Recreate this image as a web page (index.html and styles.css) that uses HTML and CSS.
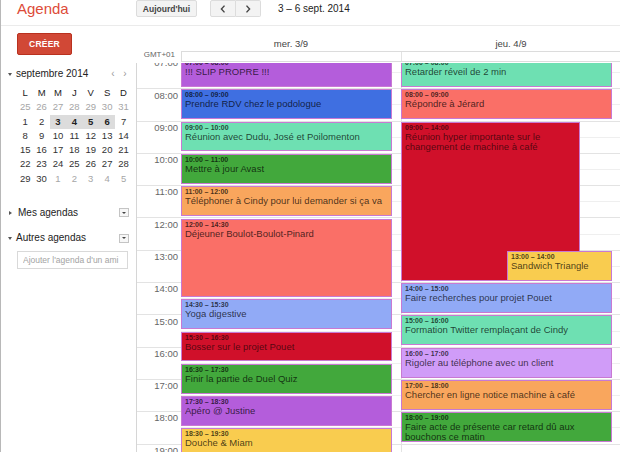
FILE: index.html
```html
<!DOCTYPE html>
<html lang="fr">
<head>
<meta charset="utf-8">
<title>Agenda</title>
<link rel="stylesheet" href="styles.css">
</head>
<body>
<div class="app">
  <header class="topbar">
    <div class="brand">Agenda</div>
    <button class="btn today">Aujourd'hui</button>
    <div class="nav">
      <button class="btn nav-btn prev"><svg width="6" height="8" viewBox="0 0 6 8"><polyline points="4.5,0.6 1.4,4 4.5,7.4"/></svg></button>
      <button class="btn nav-btn next"><svg width="6" height="8" viewBox="0 0 6 8"><polyline points="1.5,0.6 4.6,4 1.5,7.4"/></svg></button>
    </div>
    <div class="range">3 – 6 sept. 2014</div>
  </header>

  <div class="main">
    <aside class="sidebar">
      <button class="create">CRÉER</button>

      <div class="mini-head">
        <span class="tri-down"></span>
        <span class="mini-title">septembre 2014</span>
        <span class="mini-arrows"><span>‹</span><span>›</span></span>
      </div>

      <div class="mini-cal">
        <span class="dow">L</span><span class="dow">M</span><span class="dow">M</span><span class="dow">J</span><span class="dow">V</span><span class="dow">S</span><span class="dow">D</span>
        <span class="other">25</span><span class="other">26</span><span class="other">27</span><span class="other">28</span><span class="other">29</span><span class="other">30</span><span class="other">31</span>
        <span>1</span><span>2</span><span class="sel">3</span><span class="sel">4</span><span class="sel">5</span><span class="sel">6</span><span>7</span>
        <span>8</span><span>9</span><span>10</span><span>11</span><span>12</span><span>13</span><span>14</span>
        <span>15</span><span>16</span><span>17</span><span>18</span><span>19</span><span>20</span><span>21</span>
        <span>22</span><span>23</span><span>24</span><span>25</span><span>26</span><span>27</span><span>28</span>
        <span>29</span><span>30</span><span class="other">1</span><span class="other">2</span><span class="other">3</span><span class="other">4</span><span class="other">5</span>
      </div>

      <div class="cal-section mine">
        <span class="tri-right"></span>
        <span class="sec-label">Mes agendas</span>
        <span class="menu-box"></span>
      </div>
      <div class="cal-section others">
        <span class="tri-down"></span>
        <span class="sec-label">Autres agendas</span>
        <span class="menu-box"></span>
      </div>
      <input class="add-input" type="text" placeholder="Ajouter l'agenda d'un ami">
    </aside>

    <section class="calendar">
      <div class="dayheads">
        <div class="gutter-sp"></div>
        <div class="dayname">mer. 3/9</div>
        <div class="dayname">jeu. 4/9</div>
      </div>
      <div class="allday">
        <div class="tz">GMT+01</div>
        <div class="allday-box"><div class="ad-cell"></div><div class="ad-cell"></div></div>
      </div>
      <div class="body">
        <div class="scroll">
          <div class="gutter">
            <div class="hr">07:00</div><div class="hr">08:00</div><div class="hr">09:00</div><div class="hr">10:00</div>
            <div class="hr">11:00</div><div class="hr">12:00</div><div class="hr">13:00</div><div class="hr">14:00</div>
            <div class="hr">15:00</div><div class="hr">16:00</div><div class="hr">17:00</div><div class="hr">18:00</div>
            <div class="hr">19:00</div>
          </div>

          <div class="day">
            <div class="ev purple" style="--s:7"><div class="t">07:00 – 08:00</div><div class="n">!!! SLIP PROPRE !!!</div></div>
            <div class="ev blue" style="--s:8"><div class="t">08:00 – 09:00</div><div class="n">Prendre RDV chez le podologue</div></div>
            <div class="ev mint" style="--s:9"><div class="t">09:00 – 10:00</div><div class="n">Réunion avec Dudu, José et Poilomenton</div></div>
            <div class="ev green" style="--s:10"><div class="t">10:00 – 11:00</div><div class="n">Mettre à jour Avast</div></div>
            <div class="ev orange" style="--s:11"><div class="t">11:00 – 12:00</div><div class="n">Téléphoner à Cindy pour lui demander si ça va</div></div>
            <div class="ev salmon" style="--s:12;--d:2.5"><div class="t">12:00 – 14:30</div><div class="n">Déjeuner Boulot-Boulot-Pinard</div></div>
            <div class="ev peri" style="--s:14.5"><div class="t">14:30 – 15:30</div><div class="n">Yoga digestive</div></div>
            <div class="ev crimson" style="--s:15.5"><div class="t">15:30 – 16:30</div><div class="n">Bosser sur le projet Pouet</div></div>
            <div class="ev green" style="--s:16.5"><div class="t">16:30 – 17:30</div><div class="n">Finir la partie de Duel Quiz</div></div>
            <div class="ev purple" style="--s:17.5"><div class="t">17:30 – 18:30</div><div class="n">Apéro @ Justine</div></div>
            <div class="ev yellow" style="--s:18.5"><div class="t">18:30 – 19:30</div><div class="n">Douche &amp; Miam</div></div>
          </div>

          <div class="day second">
            <div class="ev mint" style="--s:7"><div class="t">07:00 – 08:00</div><div class="n">Retarder réveil de 2 min</div></div>
            <div class="ev salmon" style="--s:8"><div class="t">08:00 – 09:00</div><div class="n">Répondre à Jérard</div></div>
            <div class="ev crimson narrow" style="--s:9;--d:5"><div class="t">09:00 – 14:00</div><div class="n">Réunion hyper importante sur le changement de machine à café</div></div>
            <div class="ev yellow overlap" style="--s:13"><div class="t">13:00 – 14:00</div><div class="n">Sandwich Triangle</div></div>
            <div class="ev peri" style="--s:14"><div class="t">14:00 – 15:00</div><div class="n">Faire recherches pour projet Pouet</div></div>
            <div class="ev mint" style="--s:15"><div class="t">15:00 – 16:00</div><div class="n">Formation Twitter remplaçant de Cindy</div></div>
            <div class="ev lavender" style="--s:16"><div class="t">16:00 – 17:00</div><div class="n">Rigoler au téléphone avec un client</div></div>
            <div class="ev orange" style="--s:17"><div class="t">17:00 – 18:00</div><div class="n">Chercher en ligne notice machine à café</div></div>
            <div class="ev green" style="--s:18"><div class="t">18:00 – 19:00</div><div class="n">Faire acte de présente car retard dû aux bouchons ce matin</div></div>
          </div>
        </div>
      </div>
    </section>
  </div>
</div>
</body>
</html>
```

FILE: styles.css
```css
* { box-sizing: border-box; }
html, body { margin: 0; padding: 0; background: #fff; }
body { font-family: "Liberation Sans", Arial, sans-serif; color: #222; }

.app {
  width: 620px;
  height: 452px;
  overflow: hidden;
  border-left: 1px solid #b8b8b8;
  display: flex;
  flex-direction: column;
}

/* ---------- top bar ---------- */
.topbar {
  height: 26px;
  flex: none;
  display: flex;
  align-items: flex-start;
  border-bottom: 1px solid #ebebeb;
}
.brand {
  width: 135px;
  flex: none;
  padding-left: 16px;
  font-size: 15px;
  line-height: 17px;
  color: #dd4b39;
}
.btn {
  font-family: inherit;
  height: 17px;
  margin: 0;
  padding: 0;
  border: 1px solid #dcdcdc;
  background: #f3f3f3;
  border-radius: 2px;
  display: flex;
  align-items: center;
  justify-content: center;
}
.today {
  width: 61px;
  font-size: 8.5px;
  font-weight: bold;
  color: #444;
}
.nav { display: flex; margin-left: 13px; }
.nav-btn { width: 26px; }
.nav-btn.prev { border-radius: 2px 0 0 2px; }
.nav-btn.next { width: 25px; border-left: none; border-radius: 0 2px 2px 0; }
.nav-btn svg polyline { fill: none; stroke: #444; stroke-width: 1.4; }
.range {
  margin-left: 17px;
  font-size: 10px;
  line-height: 17px;
  color: #222;
}

/* ---------- main ---------- */
.main { flex: 1; display: flex; min-height: 0; }

/* ---------- sidebar ---------- */
.sidebar { width: 135px; flex: none; display: flex; flex-direction: column; }
.create {
  margin: 7px 0 0 16px;
  width: 55px;
  height: 22px;
  padding: 0;
  border: 1px solid #b9311f;
  border-radius: 2px;
  background: #d14836;
  color: #fff;
  font-family: inherit;
  font-size: 8.5px;
  font-weight: bold;
  letter-spacing: 0.2px;
}
.mini-head {
  margin-top: 13px;
  height: 12px;
  display: flex;
  align-items: center;
  padding-right: 5px;
}
.tri-down {
  margin-left: 7px;
  width: 0; height: 0;
  border-left: 2.5px solid transparent;
  border-right: 2.5px solid transparent;
  border-top: 3px solid #555;
}
.tri-right {
  margin-left: 8px;
  width: 0; height: 0;
  border-top: 2.5px solid transparent;
  border-bottom: 2.5px solid transparent;
  border-left: 3px solid #555;
}
.mini-title { margin-left: 4px; font-size: 10px; line-height: 12px; color: #222; }
.mini-arrows { margin-left: auto; display: flex; }
.mini-arrows span { width: 12px; text-align: center; font-size: 10px; line-height: 12px; color: #999; }

.mini-cal {
  margin: 6px 0 0 16px;
  display: grid;
  grid-template-columns: repeat(7, 16.4px);
  grid-auto-rows: 14.3px;
  font-size: 9.5px;
  line-height: 14.3px;
  text-align: center;
  color: #333;
}
.mini-cal .dow { color: #222; }
.mini-cal .other { color: #a6a6a6; }
.mini-cal .sel { background: #dcdcdc; font-weight: bold; color: #222; }

.cal-section {
  height: 12px;
  display: flex;
  align-items: center;
  font-size: 10px;
  line-height: 12px;
  color: #222;
}
.cal-section.mine { margin-top: 20.6px; }
.cal-section.mine .sec-label { margin-left: 6px; }
.cal-section.others { margin-top: 13.6px; }
.cal-section.others .sec-label { margin-left: 4px; }
.menu-box {
  margin-left: auto;
  margin-right: 7px;
  width: 10px;
  height: 9px;
  border: 1px solid #c4c4c4;
  background: #f7f7f7;
  display: flex;
  align-items: center;
  justify-content: center;
}
.menu-box::after {
  content: "";
  width: 0; height: 0;
  border-left: 2px solid transparent;
  border-right: 2px solid transparent;
  border-top: 2.5px solid #444;
}
.add-input {
  margin: 6.7px 0 0 16px;
  width: 111px;
  height: 18px;
  border: 1px solid #d9d9d9;
  padding: 0 0 0 5px;
  font-family: inherit;
  font-size: 8.5px;
  color: #222;
  background: #fff;
}
.add-input::placeholder { color: #a3a3a3; }

/* ---------- calendar ---------- */
.calendar { width: 485px; flex: none; display: flex; flex-direction: column; }
.dayheads { height: 24px; flex: none; display: flex; }
.gutter-sp { width: 45px; flex: none; }
.dayname {
  width: 220px;
  flex: none;
  padding-top: 12px;
  text-align: center;
  font-size: 9.5px;
  line-height: 11px;
  color: #444;
}
.allday { height: 13px; flex: none; display: flex; }
.tz {
  width: 45px;
  flex: none;
  padding-right: 6px;
  text-align: right;
  font-size: 8px;
  line-height: 9px;
  color: #666;
}
.allday-box {
  width: 440px;
  flex: none;
  height: 11px;
  margin-top: 1px;
  border: 1px solid #dcdcdc;
  display: flex;
}
.ad-cell { width: 220px; flex: none; border-right: 1px solid #e3e3e3; }
.ad-cell:last-child { border-right: none; }

.body {
  flex: 1;
  min-height: 0;
  overflow: hidden;
  border-left: 1px solid #d6d6d6;
}
.scroll { display: flex; margin-top: -6.8px; }
.gutter {
  width: 44px;
  flex: none;
  background: repeating-linear-gradient(to bottom, #e3e3e3 0, #e3e3e3 1px, transparent 1px, transparent 32.3px);
}
.hr {
  height: 32.3px;
  padding: 1px 3px 0 0;
  text-align: right;
  font-size: 9.5px;
  line-height: 11px;
  color: #666;
}
.day {
  width: 220px;
  flex: none;
  height: 419.9px;
  position: relative;
  background: repeating-linear-gradient(to bottom,
    #e3e3e3 0, #e3e3e3 1px,
    transparent 1px, transparent 16.15px,
    #efefef 16.15px, #efefef 17.15px,
    transparent 17.15px, transparent 32.3px);
}
.day.second { box-shadow: inset 1px 0 0 #e3e3e3; }

/* ---------- events ---------- */
.ev {
  position: absolute;
  left: 0;
  width: 211px;
  top: calc((var(--s) - 7) * 32.3px + 0.8px);
  height: calc(var(--d, 1) * 32.3px - 2.5px);
  border: 1px solid #c879d3;
  padding: 0 3px;
  overflow: hidden;
  color: rgba(0, 0, 0, 0.72);
}
.ev .t {
  font-size: 7px;
  font-weight: bold;
  line-height: 9px;
  white-space: nowrap;
}
.ev .n { font-size: 9.5px; line-height: 10px; }
.ev.narrow { width: 179px; }
.ev.overlap { left: 106px; width: 105px; z-index: 2; }

.purple { background: #b45ddb; }
.blue { background: #3f6fe1; }
.mint { background: #6ee0b2; }
.green { background: #42a83c; }
.orange { background: #f9a65d; }
.salmon { background: #fa6f67; }
.peri { background: #91aaf6; }
.crimson { background: #d0102a; color: rgba(0, 0, 0, 0.62); }
.yellow { background: #f9cc4f; }
.lavender { background: #d09cf8; }
```
